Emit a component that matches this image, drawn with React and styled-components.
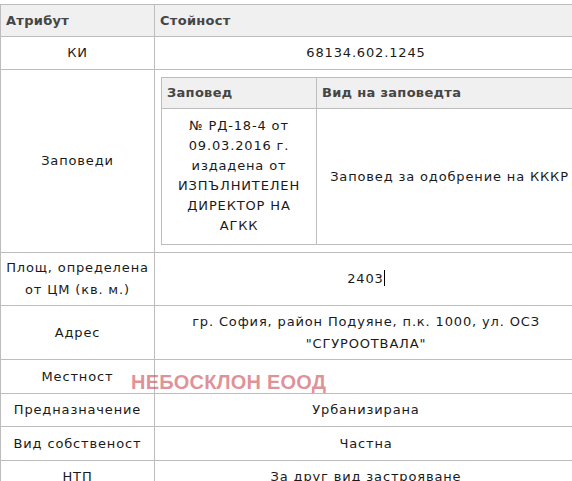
import React from 'react';
import styled, { createGlobalStyle } from 'styled-components';

const GlobalStyle = createGlobalStyle`
  html, body {
    margin: 0;
    padding: 0;
    background: #ffffff;
    overflow: hidden;
  }
  body {
    font-family: "DejaVu Sans", Verdana, sans-serif;
    font-size: 13px;
    color: #1a1a1a;
  }
`;

const Page = styled.div`
  position: relative;
  padding-top: 4px;
  width: 600px;
`;

const Table = styled.table`
  border-collapse: collapse;
  width: ${(p) => p.$width}px;
  table-layout: fixed;
`;

const HeadCell = styled.th`
  background: #f0f0f0;
  border: 1px solid #bdbdbd;
  color: #454545;
  font-weight: bold;
  text-align: left;
  padding: 0 4px 0 5px;
  height: ${(p) => p.$height || 31}px;
  line-height: 20px;
  letter-spacing: 0.3px;
`;

const Cell = styled.td`
  border: 1px solid #bdbdbd;
  text-align: center;
  vertical-align: middle;
  padding: ${(p) => p.$pad || '6px 6px'};
  line-height: ${(p) => p.$lh || 20}px;
  letter-spacing: 0.85px;
`;

const Caret = styled.span`
  display: inline-block;
  width: 1px;
  height: 16px;
  background: #000;
  vertical-align: -3px;
`;

const Watermark = styled.div`
  position: absolute;
  left: 131px;
  top: 371px;
  font-family: "Liberation Sans", Arial, sans-serif;
  font-weight: bold;
  font-size: 20px;
  color: rgba(196, 52, 62, 0.55);
  letter-spacing: 0.2px;
  pointer-events: none;
`;

const rows = [
  { label: 'Площ, определена от ЦМ (кв. м.)', value: '2403', caret: true, h: 53 },
  { label: 'Адрес', value: 'гр. София, район Подуяне, п.к. 1000, ул. ОСЗ "СГУРООТВАЛА"', h: 54 },
  { label: 'Местност', value: '', h: 34 },
  { label: 'Предназначение', value: 'Урбанизирана', h: 33 },
  { label: 'Вид собственост', value: 'Частна', h: 34 },
  { label: 'НТП', value: 'За друг вид застрояване', h: 33 },
];

export default function App() {
  return (
    <Page>
      <GlobalStyle />
      <Table $width={578}>
        <colgroup>
          <col style={{ width: 154 }} />
          <col />
        </colgroup>
        <thead>
          <tr>
            <HeadCell>Атрибут</HeadCell>
            <HeadCell>Стойност</HeadCell>
          </tr>
        </thead>
        <tbody>
          <tr>
            <Cell style={{ height: 20 }}>КИ</Cell>
            <Cell>68134.602.1245</Cell>
          </tr>
          <tr>
            <Cell $pad="4px 4px">Заповеди</Cell>
            <Cell $pad="7px 0 7px 6px">
              <Table $width={418}>
                <colgroup>
                  <col style={{ width: 155 }} />
                  <col />
                </colgroup>
                <thead>
                  <tr>
                    <HeadCell $height={30}>Заповед</HeadCell>
                    <HeadCell $height={30}>Вид на заповедта</HeadCell>
                  </tr>
                </thead>
                <tbody>
                  <tr>
                    <Cell $pad="7px 6px 8px">
                      № РД-18-4 от 09.03.2016 г. издадена от ИЗПЪЛНИТЕЛЕН ДИРЕКТОР НА АГКК
                    </Cell>
                    <Cell $pad="6px 2px 6px 6px">Заповед за одобрение на КККР</Cell>
                  </tr>
                </tbody>
              </Table>
            </Cell>
          </tr>
          {rows.map((r) => (
            <tr key={r.label} style={{ height: r.h }}>
              <Cell $pad="4px 2px" $lh={22}>{r.label}</Cell>
              <Cell $pad="4px 6px" $lh={22}>
                {r.value}
                {r.caret && <Caret />}
              </Cell>
            </tr>
          ))}
        </tbody>
      </Table>
      <Watermark>НЕБОСКЛОН ЕООД</Watermark>
    </Page>
  );
}
